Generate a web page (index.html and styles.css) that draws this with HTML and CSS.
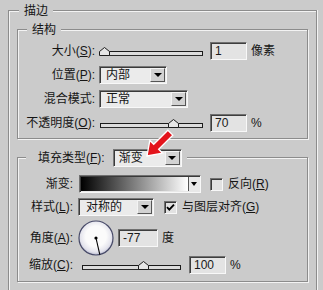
FILE: index.html
```html
<!DOCTYPE html>
<html lang="zh-CN">
<head>
<meta charset="utf-8">
<title>描边</title>
<link rel="stylesheet" href="styles.css">
</head>
<body>
<div class="group outer">
  <div class="title outer-title">描边</div>

  <div class="group struct">
    <div class="title struct-title">结构</div>
    <div class="row">
      <span class="lbl">大小(<u>S</u>):</span>
      <div class="slider">
        <div class="track"></div>
        <svg class="thumb" style="left:0px" width="11" height="9" viewBox="0 0 11 9"><path d="M0.5 8.5V4.5L5.5 0.5L10.5 4.5V8.5Z" fill="#e6e6e6" stroke="#1e1e1e"/></svg>
      </div>
      <div class="field">1</div>
      <span class="unit">像素</span>
    </div>
    <div class="row">
      <span class="lbl">位置(<u>P</u>):</span>
      <div class="select sel-pos"><span class="val">内部</span><span class="btn"><i class="tri"></i></span></div>
    </div>
    <div class="row">
      <span class="lbl">混合模式:</span>
      <div class="select sel-blend"><span class="val">正常</span><span class="btn"><i class="tri"></i></span></div>
    </div>
    <div class="row">
      <span class="lbl">不透明度(<u>O</u>):</span>
      <div class="slider">
        <div class="track"></div>
        <svg class="thumb" style="left:69px" width="11" height="9" viewBox="0 0 11 9"><path d="M0.5 8.5V4.5L5.5 0.5L10.5 4.5V8.5Z" fill="#e6e6e6" stroke="#1e1e1e"/></svg>
      </div>
      <div class="field">70</div>
      <span class="unit">%</span>
    </div>
  </div>

  <div class="group fill">
    <div class="title fill-title">
      <span class="tlbl">填充类型(<u>F</u>):</span>
      <div class="select sel-type"><span class="val">渐变</span><span class="btn"><i class="tri"></i></span></div>
    </div>
    <div class="row r1">
      <span class="flbl">渐变:</span>
      <div class="gradient"><span class="ramp"></span><span class="gbtn"><i class="tri"></i></span></div>
      <span class="check c1"></span>
      <span class="ctext">反向(<u>R</u>)</span>
    </div>
    <div class="row r2">
      <span class="flbl">样式(<u>L</u>):</span>
      <div class="select sel-style"><span class="val">对称的</span><span class="btn"><i class="tri"></i></span></div>
      <span class="check c2"><svg width="11" height="11" viewBox="0 0 11 11"><path d="M2 5.2L4.3 7.6L9 2.6" fill="none" stroke="#000" stroke-width="1.9"/></svg></span>
      <span class="ctext">与图层对齐(<u>G</u>)</span>
    </div>
    <div class="row r3">
      <span class="flbl">角度(<u>A</u>):</span>
      <svg class="dial" width="36" height="36" viewBox="0 0 36 36">
        <defs>
          <radialGradient id="dg" cx="50%" cy="45%" r="55%">
            <stop offset="0.55" stop-color="#fbfbfb"/>
            <stop offset="0.85" stop-color="#e3e3ec"/>
            <stop offset="1" stop-color="#b5b7cc"/>
          </radialGradient>
        </defs>
        <circle cx="18" cy="18" r="17" fill="url(#dg)" stroke="#474a68" stroke-width="1.2"/>
        <line x1="18" y1="18" x2="21.8" y2="34.6" stroke="#000" stroke-width="1.1"/>
        <circle cx="18" cy="18" r="1.6" fill="#000"/>
      </svg>
      <div class="field f-angle">-77</div>
      <span class="unit">度</span>
    </div>
    <div class="row r4">
      <span class="flbl">缩放(<u>C</u>):</span>
      <div class="slider s-scale">
        <div class="track"></div>
        <svg class="thumb" style="left:57px" width="11" height="9" viewBox="0 0 11 9"><path d="M0.5 8.5V4.5L5.5 0.5L10.5 4.5V8.5Z" fill="#e6e6e6" stroke="#1e1e1e"/></svg>
      </div>
      <div class="field f-scale">100</div>
      <span class="unit">%</span>
    </div>
  </div>
</div>

<svg class="pointer" width="40" height="36" viewBox="0 0 40 36">
  <path transform="translate(11 30) rotate(135)" d="M0 0L-13 -9L-13 -3.5L-33 -3.5L-33 3.5L-13 3.5L-13 9Z" fill="#e3141c" stroke="#ffffff" stroke-width="1.3" stroke-linejoin="miter"/>
</svg>
</body>
</html>
```

FILE: styles.css
```css
* { box-sizing: border-box; margin: 0; padding: 0; }

body {
  background: #cbcbcb;
  color: #151515;
  font-family: "Liberation Sans", "Noto Sans CJK SC", sans-serif;
  font-size: 12px;
  line-height: 16px;
  width: 323px;
  height: 290px;
  overflow: hidden;
  position: relative;
}

u { text-decoration: underline; text-underline-offset: 1px; }

.group {
  border: 1px solid #8c8c8c;
  box-shadow: inset 1px 1px 0 #f3f3f3, 1px 1px 0 #f3f3f3;
}

.title {
  background: #cbcbcb;
  height: 18px;
  margin-top: -9px;
  display: flex;
  align-items: center;
  width: max-content;
  padding: 0 5px;
}

.outer {
  margin: 10px 6px 0 8px;
  height: 280px;
  border-bottom: 0;
  box-shadow: inset 1px 1px 0 #f3f3f3, 1px 0 0 #f3f3f3;
}
.outer-title { margin-left: 10px; }

.struct { margin: 9px 8px 0 8px; padding-bottom: 3px; }
.struct-title { margin-left: 9px; }

.row { display: flex; align-items: center; height: 24px; }

.lbl { width: 77px; margin-right: 4px; text-align: right; flex: none; white-space: nowrap; }

/* slider */
.slider { position: relative; width: 104px; height: 10px; flex: none; }
.track {
  margin: 5px 0 0 1px;
  width: 103px;
  height: 5px;
  background: #dcdcdc;
  border: 1px solid #1a1a1a;
  border-bottom-color: #2a2a2a;
}
.thumb { position: absolute; top: 1px; display: block; }

/* text field */
.field {
  height: 18px;
  width: 37px;
  margin-left: 7px;
  padding-left: 4px;
  background: #e3e3e3;
  border: 1px solid;
  border-color: #707070 #f8f8f8 #f8f8f8 #707070;
  box-shadow: inset 1px 1px 0 #3e3e3e;
  display: flex;
  align-items: center;
  color: #1a1a1a;
  flex: none;
}
.unit { margin-left: 4px; }

/* select */
.select {
  display: flex;
  align-items: center;
  height: 18px;
  padding: 1px 1px 1px 6px;
  background: #ebebeb;
  border: 1px solid;
  border-color: #777 #f8f8f8 #f8f8f8 #777;
  box-shadow: inset 1px 1px 0 #3a3a3a;
  flex: none;
}
.select .val { flex: 1; }
.btn {
  width: 15px;
  height: 14px;
  background: #d2d2d2;
  border: 1px solid;
  border-color: #f4f4f4 #555 #555 #f4f4f4;
  display: flex;
  align-items: center;
  justify-content: center;
}
.tri {
  display: block;
  width: 0;
  height: 0;
  border-top: 4px solid #000;
  border-left: 4px solid transparent;
  border-right: 4px solid transparent;
}
.sel-pos { width: 68px; }
.sel-blend { width: 89px; }
.sel-type { width: 69px; padding-left: 5px; }
.sel-style { width: 76px; padding-left: 7px; }

/* fill group */
.fill { margin: 18px 8px 0 8px; padding: 0 0 7px; }
.fill-title { height: 20px; margin-top: -10px; margin-bottom: 6px; margin-left: 8px; padding: 0 5px 0 12px; }
.tlbl { margin-right: 8px; }

.flbl { width: 55px; margin-right: 5px; text-align: right; flex: none; white-space: nowrap; }

.r1 { height: 20px; }
.r2 { height: 26px; }
.r3 { height: 36px; }
.r4 { height: 18px; }

.gradient {
  display: flex;
  width: 122px;
  height: 18px;
  margin-left: 1px;
  padding: 1px;
  border: 1px solid;
  border-color: #707070 #f8f8f8 #f8f8f8 #707070;
  box-shadow: inset 1px 1px 0 #3a3a3a;
  background: #e8e8e8;
  flex: none;
}
.ramp { flex: 1; background: linear-gradient(to right, #000 0%, #fff 100%); }
.gbtn {
  width: 11px;
  background: #e8e8e8;
  border-left: 1px solid #555;
  display: flex;
  align-items: center;
  justify-content: center;
}
.gbtn .tri { border-top-width: 4px; border-left-width: 3px; border-right-width: 3px; }

.check {
  width: 13px;
  height: 13px;
  background: #e2e2e2;
  border: 1px solid;
  border-color: #707070 #f8f8f8 #f8f8f8 #707070;
  box-shadow: inset 1px 1px 0 #3a3a3a;
  display: flex;
  align-items: center;
  justify-content: center;
  flex: none;
}
.c1 { margin-left: 9px; }
.c2 { margin-left: 10px; }
.ctext { margin-left: 5px; white-space: nowrap; }

.dial { display: block; flex: none; }
.f-angle { width: 40px; margin-left: 4px; }
.s-scale { width: 100px; margin-left: 3px; }
.s-scale .track { width: 99px; }
.f-scale { margin-left: 8px; }

.pointer { position: absolute; left: 136px; top: 126px; }
```
